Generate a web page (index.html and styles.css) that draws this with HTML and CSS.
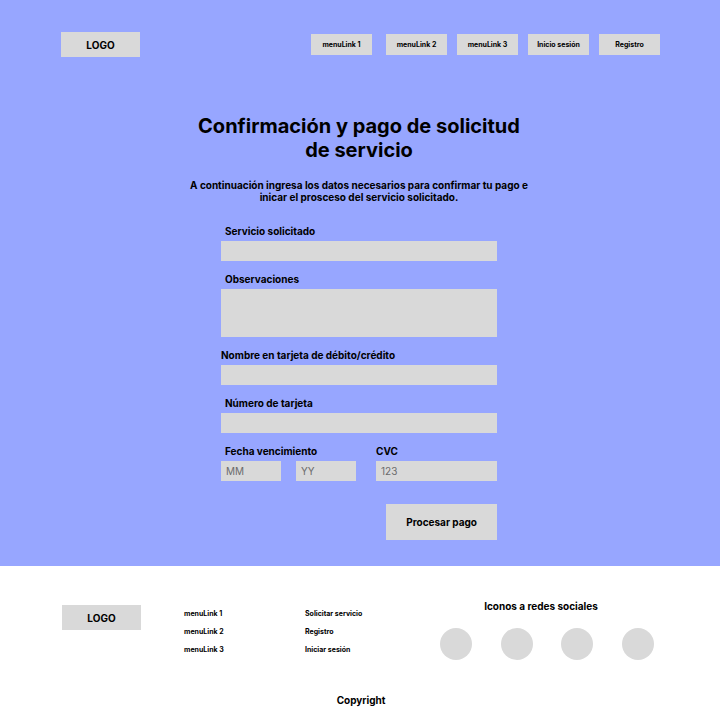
FILE: index.html
```html
<!DOCTYPE html>
<html lang="es">
<head>
  <meta charset="utf-8">
  <meta name="viewport" content="width=device-width, initial-scale=1">
  <title>Confirmación y pago</title>
  <link rel="stylesheet" href="styles.css">
</head>
<body>
  <div class="hero">
    <header class="header">
      <a class="logo" href="#">LOGO</a>
      <nav class="nav">
        <a class="nav-link nav-link-first" href="#">menuLink 1</a>
        <a class="nav-link" href="#">menuLink 2</a>
        <a class="nav-link" href="#">menuLink 3</a>
        <a class="nav-link" href="#">Inicio sesión</a>
        <a class="nav-link" href="#">Registro</a>
      </nav>
    </header>

    <main class="main">
      <h1 class="title">Confirmación y pago de solicitud de servicio</h1>
      <p class="intro">A continuación ingresa los datos necesarios para confirmar tu pago e inicar el prosceso del servicio solicitado.</p>

      <form class="form">
        <div class="field">
          <label class="label label-indent" for="servicio">Servicio solicitado</label>
          <input class="input" id="servicio" type="text">
        </div>
        <div class="field">
          <label class="label label-indent" for="observaciones">Observaciones</label>
          <textarea class="input input-tall" id="observaciones"></textarea>
        </div>
        <div class="field">
          <label class="label" for="nombre">Nombre en tarjeta de débito/crédito</label>
          <input class="input" id="nombre" type="text">
        </div>
        <div class="field">
          <label class="label label-indent" for="numero">Número de tarjeta</label>
          <input class="input" id="numero" type="text">
        </div>
        <div class="card-row">
          <div class="field expiry">
            <label class="label label-indent" for="mes">Fecha vencimiento</label>
            <div class="expiry-inputs">
              <input class="input" id="mes" type="text" placeholder="MM">
              <input class="input" type="text" placeholder="YY" aria-label="Año de vencimiento">
            </div>
          </div>
          <div class="field cvc">
            <label class="label" for="cvc">CVC</label>
            <input class="input" id="cvc" type="text" placeholder="123">
          </div>
        </div>
        <button class="submit" type="button">Procesar pago</button>
      </form>
    </main>
  </div>

  <footer class="footer">
    <div class="footer-grid">
      <div><a class="logo" href="#">LOGO</a></div>
      <ul class="links">
        <li><a href="#">menuLink 1</a></li>
        <li><a href="#">menuLink 2</a></li>
        <li><a href="#">menuLink 3</a></li>
      </ul>
      <ul class="links">
        <li><a href="#">Solicitar servicio</a></li>
        <li><a href="#">Registro</a></li>
        <li><a href="#">Iniciar sesión</a></li>
      </ul>
      <section class="social">
        <h2 class="social-title">Iconos a redes sociales</h2>
        <div class="social-icons">
          <a class="social-icon" href="#"></a>
          <a class="social-icon" href="#"></a>
          <a class="social-icon" href="#"></a>
          <a class="social-icon" href="#"></a>
        </div>
      </section>
    </div>
    <p class="copyright">Copyright</p>
  </footer>
</body>
</html>
```
FILE: styles.css
```css
* {
  box-sizing: border-box;
}

body {
  margin: 0;
  background: #fff;
  color: #000;
  font: 700 10px/12px Inter, "Liberation Sans", sans-serif;
}

a {
  color: inherit;
  text-decoration: none;
}

.hero {
  padding-bottom: 26px;
  background: #97a6ff;
}

.header {
  display: flex;
  justify-content: space-between;
  align-items: center;
  padding: 32px 60px 0 61px;
}

.logo {
  display: flex;
  align-items: center;
  justify-content: center;
  width: 79px;
  height: 25px;
  background: #d9d9d9;
}

.nav {
  display: flex;
  gap: 10px;
}

.nav-link {
  width: 61px;
  padding: 7px 0 6px;
  background: #d9d9d9;
  font-size: 7px;
  line-height: 8px;
  text-align: center;
}

.nav-link-first {
  margin-right: 4px;
}

.main {
  padding: 57px 2px 0 0;
}

.title {
  max-width: 350px;
  margin: 0 auto;
  font-size: 20px;
  line-height: 24px;
  text-align: center;
}

.intro {
  max-width: 350px;
  margin: 17px auto 22px;
  text-align: center;
}

.form {
  display: flex;
  flex-direction: column;
  gap: 12px;
  max-width: 276px;
  margin: 0 auto;
}

.field {
  display: flex;
  flex-direction: column;
  gap: 4px;
}

.label-indent {
  padding-left: 4px;
}

.input {
  width: 100%;
  min-width: 0;
  height: 20px;
  padding: 0 5px;
  border: 0;
  border-radius: 0;
  background: #d9d9d9;
  color: #000;
  font: 400 10px/12px Inter, "Liberation Sans", sans-serif;
}

.input::placeholder {
  color: #6b6b6b;
  opacity: 1;
}

.input-tall {
  height: 48px;
  padding: 4px 5px;
  resize: none;
}

.card-row {
  display: flex;
  gap: 20px;
}

.expiry {
  flex: 135;
}

.expiry-inputs {
  display: flex;
  gap: 15px;
}

.cvc {
  flex: 121;
}

.submit {
  align-self: flex-end;
  height: 36px;
  margin-top: 11px;
  padding: 0 20px;
  border: 0;
  background: #d9d9d9;
  color: #000;
  font: inherit;
}

.footer {
  padding: 34px 66px 18px 62px;
}

.footer-grid {
  display: grid;
  grid-template-columns: 122fr 121fr 135fr 214fr;
}

.footer .logo {
  margin-top: 5px;
}

.links {
  display: flex;
  flex-direction: column;
  gap: 10px;
  margin: 10px 0 0;
  padding: 0;
  list-style: none;
  font-size: 7px;
  line-height: 8px;
}

.social-title {
  margin: 0 0 16px;
  padding-right: 12px;
  font-size: 10px;
  text-align: center;
}

.social-icons {
  display: flex;
  justify-content: space-between;
}

.social-icon {
  width: 32px;
  height: 32px;
  border-radius: 50%;
  background: #d9d9d9;
}

.copyright {
  margin: 34px 0 0;
  padding-left: 6px;
  text-align: center;
}
```
